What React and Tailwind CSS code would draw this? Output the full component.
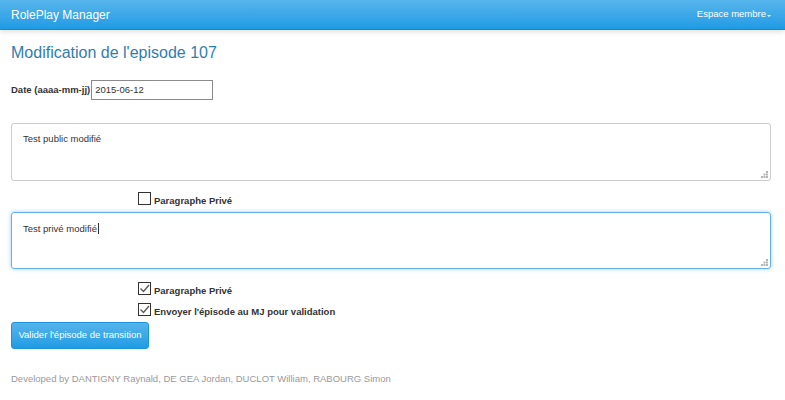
export default function App() {
  return (
    <div className="min-h-[400px] w-[785px] bg-white font-['Liberation_Sans',Arial,sans-serif] text-[#555]">
      <Navbar />
      <main className="px-[11px]">
        <h3 className="mt-[13px] text-[16px] leading-[20px] text-[#317eac]">Modification de l'episode 107</h3>

        <div className="mt-[17px] flex items-center gap-[1px]">
          <label className="text-[9.5px] font-bold text-[#333]">Date (aaaa-mm-jj)</label>
          <div className="flex h-[20px] w-[122px] items-center border border-[#8a8a8a] px-[3px] text-[9.5px] text-[#333]">
            2015-06-12
          </div>
        </div>

        <TextBox className="mt-[23px] h-[58px] border-[#ccc]" text="Test public modifié" />

        <CheckRow className="mt-[11px]" label="Paragraphe Privé" />

        <TextBox
          className="mt-[7px] h-[57px] border-[#66afe9] shadow-[0_0_4px_rgba(102,175,233,0.6)]"
          text="Test privé modifié"
          caret
        />

        <CheckRow className="mt-[13px]" label="Paragraphe Privé" checked />
        <CheckRow className="mt-[8px]" label="Envoyer l'épisode au MJ pour validation" checked />

        <button className="mt-[6px] flex h-[27px] w-[138px] items-center justify-center rounded-[3px] border border-[#1f93d9] bg-gradient-to-b from-[#54b4eb] to-[#1d9ce5] text-[9.5px] text-white">
          Valider l'épisode de transition
        </button>

        <footer className="mt-[23px] text-[9.5px] leading-[13px] text-[#999]">
          Developed by DANTIGNY Raynald, DE GEA Jordan, DUCLOT William, RABOURG Simon
        </footer>
      </main>
    </div>
  );
}

function Navbar() {
  return (
    <nav className="flex h-[30px] items-center justify-between border-b border-[#178acc] bg-gradient-to-b from-[#56b5ec] to-[#1c9be4] px-[11px] shadow-[0_2px_5px_rgba(0,0,0,0.12)]">
      <span className="text-[12px] text-white">RolePlay Manager</span>
      <span className="mr-[3px] flex items-center text-[9.5px] text-white">
        Espace membre
        <span className="ml-[1px] mt-[2px] h-0 w-0 border-x-[2px] border-t-[2px] border-x-transparent border-t-white" />
      </span>
    </nav>
  );
}

function TextBox({ className, text, caret }) {
  return (
    <div className={`relative w-[760px] rounded-[3px] border px-[11px] pt-[8px] text-[9.5px] leading-[13px] text-[#333] ${className}`}>
      {text}
      {caret && <span className="ml-[1px] inline-block h-[11px] w-px translate-y-[2px] bg-[#333]" />}
      <svg className="absolute bottom-[2px] right-[2px]" width="7" height="7" viewBox="0 0 7 7">
        <rect x="5" y="0" width="2" height="2" fill="#b5b5b5" />
        <rect x="2.5" y="2.5" width="2" height="2" fill="#b5b5b5" />
        <rect x="5" y="2.5" width="2" height="2" fill="#b5b5b5" />
        <rect x="0" y="5" width="2" height="2" fill="#b5b5b5" />
        <rect x="2.5" y="5" width="2" height="2" fill="#b5b5b5" />
        <rect x="5" y="5" width="2" height="2" fill="#b5b5b5" />
      </svg>
    </div>
  );
}

function CheckRow({ className, label, checked }) {
  return (
    <div className={`ml-[127px] flex h-[13px] items-center gap-[3px] ${className}`}>
      <span className="flex h-[13px] w-[13px] shrink-0 items-center justify-center border border-[#333] bg-white">
        {checked && (
          <svg width="11" height="11" viewBox="0 0 11 11">
            <path d="M1.5 5.5 L4.5 8.5 L10 2" fill="none" stroke="#555" strokeWidth="1.3" />
          </svg>
        )}
      </span>
      <span className="translate-y-[2px] text-[9.5px] font-bold leading-[13px] text-[#333]">{label}</span>
    </div>
  );
}
